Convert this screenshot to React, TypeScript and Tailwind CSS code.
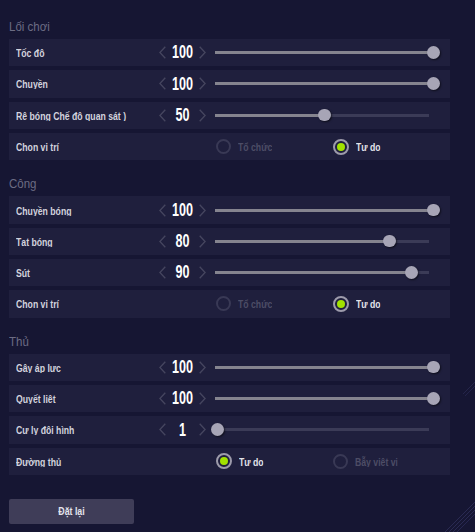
import React from "react";

type SliderRow = { kind: "slider"; label: string; value: number };
type RadioRow = { kind: "radio"; label: string; options: [string, string]; selected: 0 | 1 };
type Row = SliderRow | RadioRow;

const sections: { title: string; rows: Row[] }[] = [
  {
    title: "Lối chơi",
    rows: [
      { kind: "slider", label: "Tốc độ", value: 100 },
      { kind: "slider", label: "Chuyền", value: 100 },
      { kind: "slider", label: "Rê bóng Chế độ quan sát )", value: 50 },
      { kind: "radio", label: "Chọn vị trí", options: ["Tổ chức", "Tự do"], selected: 1 },
    ],
  },
  {
    title: "Công",
    rows: [
      { kind: "slider", label: "Chuyền bóng", value: 100 },
      { kind: "slider", label: "Tạt bóng", value: 80 },
      { kind: "slider", label: "Sút", value: 90 },
      { kind: "radio", label: "Chọn vị trí", options: ["Tổ chức", "Tự do"], selected: 1 },
    ],
  },
  {
    title: "Thủ",
    rows: [
      { kind: "slider", label: "Gây áp lực", value: 100 },
      { kind: "slider", label: "Quyết liệt", value: 100 },
      { kind: "slider", label: "Cự ly đội hình", value: 1 },
      { kind: "radio", label: "Đường thủ", options: ["Tự do", "Bẫy việt vị"], selected: 0 },
    ],
  },
];

function Chevron({ dir }: { dir: "l" | "r" }) {
  return (
    <svg width="7" height="13" viewBox="0 0 7 13" className="shrink-0">
      <polyline
        points={dir === "l" ? "6.3,0.7 0.9,6.5 6.3,12.3" : "0.7,0.7 6.1,6.5 0.7,12.3"}
        fill="none"
        stroke="#46465f"
        strokeWidth="1.3"
      />
    </svg>
  );
}

function Label({ text, color = "text-[#d3d3de]" }: { text: string; color?: string }) {
  return (
    <span
      className={`block h-[13px] mb-[2px] overflow-hidden whitespace-nowrap origin-left scale-x-[0.79] text-[11px] leading-[16px] font-bold ${color}`}
    >
      {text}
    </span>
  );
}

function Slider({ value }: { value: number }) {
  const pos = value * 2.18;
  return (
    <div className="relative ml-[9px] w-[224px] h-[14px]">
      <div className="absolute left-0 top-[5.5px] h-[3px] w-[214px] bg-[#3b3b57]" />
      <div className="absolute left-0 top-[5.5px] h-[3px] bg-[#85848f]" style={{ width: pos }} />
      <div
        className="absolute top-[0.5px] w-[12.5px] h-[12.5px] rounded-full bg-[#a7a5b6] shadow-[1px_1px_2px_rgba(0,0,0,0.55)]"
        style={{ left: pos - 6 }}
      />
    </div>
  );
}

function Radio({ on }: { on: boolean }) {
  if (on) {
    return (
      <div className="w-4 h-4 shrink-0 rounded-full border-2 border-[#9d9bab] flex items-center justify-center">
        <div className="w-[8px] h-[8px] rounded-full bg-[#a2e200]" />
      </div>
    );
  }
  return <div className="w-[15px] h-[15px] shrink-0 rounded-full border-2 border-[#393955]" />;
}

function RowView({ row }: { row: Row }) {
  return (
    <div className="w-[441px] h-[27.3px] bg-[#1f1f3d] flex items-center pl-[7px]">
      <div className="w-[143px] shrink-0">
        <Label text={row.label} />
      </div>
      {row.kind === "slider" ? (
        <>
          <Chevron dir="l" />
          <span className="block w-[33px] text-center text-[18.5px] leading-none font-bold text-white scale-x-[0.68]">
            {row.value}
          </span>
          <Chevron dir="r" />
          <Slider value={row.value} />
        </>
      ) : (
        <div className="ml-[57px] flex items-center">
          {row.options.map((o, i) => (
            <div key={o} className="w-[117px] flex items-center">
              <Radio on={row.selected === i} />
              <div className="ml-[7px]">
                <Label text={o} color={row.selected === i ? "text-[#e2e2ea]" : "text-[#4d4d66]"} />
              </div>
            </div>
          ))}
        </div>
      )}
    </div>
  );
}

export default function App() {
  return (
    <div className="relative w-[475px] h-[532px] overflow-hidden bg-[#161633] font-['Liberation_Sans',Arial,sans-serif]">
      <div className="flex flex-col pl-[9px] pt-[16px]">
        {sections.map((s, si) => (
          <div key={si} className={`flex flex-col ${si === 0 ? "" : "mt-[13.2px]"}`}>
            <div className="h-[22px] mb-[1px] flex items-center">
              <span className="block origin-left scale-x-[0.92] text-[12.5px] leading-none text-[#6c6c84]">
                {s.title}
              </span>
            </div>
            <div className="flex flex-col gap-[4px]">
              {s.rows.map((r, ri) => (
                <RowView key={ri} row={r} />
              ))}
            </div>
          </div>
        ))}
        <button className="mt-[24px] w-[125px] h-[25px] rounded-[2px] bg-[#3f3d58] flex items-center justify-center">
          <span className="block scale-x-[0.8] text-[11px] leading-none font-bold text-[#e4e4ec]">Đặt lại</span>
        </button>
      </div>
      <svg className="absolute right-0 bottom-0" width="30" height="150" viewBox="0 0 30 150">
        <line x1="18" y1="12" x2="30" y2="0" stroke="#25254a" strokeWidth="1" />
        <line x1="20" y1="14" x2="30" y2="4" stroke="#23234a" strokeWidth="1" />
        <line x1="0" y1="150" x2="30" y2="120" stroke="#2a2a52" strokeWidth="1" />
        <line x1="4" y1="150" x2="30" y2="124" stroke="#2a2a52" strokeWidth="1" />
        <line x1="8" y1="150" x2="30" y2="128" stroke="#2a2a52" strokeWidth="1" />
        <line x1="12" y1="150" x2="30" y2="132" stroke="#262650" strokeWidth="1" />
      </svg>
    </div>
  );
}
